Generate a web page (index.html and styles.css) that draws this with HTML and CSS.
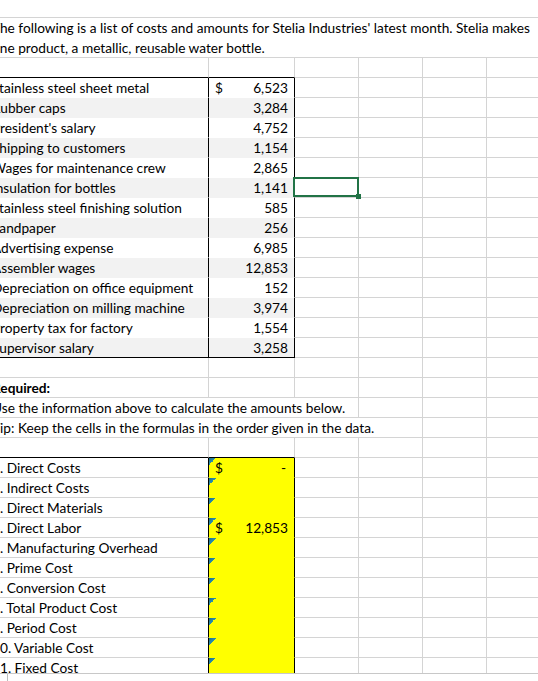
FILE: index.html
```html
<!DOCTYPE html>
<html>
<head>
<meta charset="utf-8">
<link rel="stylesheet" href="styles.css">
</head>
<body>
<div class="wrap">
<div class="sheet">
  <div class="c top"></div>
  <div class="c intro">The following is a list of costs and amounts for Stelia Industries' latest month. Stelia makes<br>one product, a metallic, reusable water bottle.</div>

  <div class="c rule-b"></div><div class="c rule-b"></div><div class="c"></div><div class="c"></div><div class="c"></div><div class="c"></div>

  <div class="c lbl">Stainless steel sheet metal</div><div class="c amt"><span>$</span><span class="num">6,523</span></div><div class="c"></div><div class="c"></div><div class="c"></div><div class="c"></div>
  <div class="c lbl alt">Rubber caps</div><div class="c amt alt"><span class="num">3,284</span></div><div class="c"></div><div class="c"></div><div class="c"></div><div class="c"></div>
  <div class="c lbl">President's salary</div><div class="c amt"><span class="num">4,752</span></div><div class="c"></div><div class="c"></div><div class="c"></div><div class="c"></div>
  <div class="c lbl alt">Shipping to customers</div><div class="c amt alt"><span class="num">1,154</span></div><div class="c"></div><div class="c"></div><div class="c"></div><div class="c"></div>
  <div class="c lbl">Wages for maintenance crew</div><div class="c amt"><span class="num">2,865</span></div><div class="c"></div><div class="c"></div><div class="c"></div><div class="c"></div>
  <div class="c lbl alt">Insulation for bottles</div><div class="c amt alt"><span class="num">1,141</span></div><div class="c sel"><div class="selbox"><div class="handle"></div></div></div><div class="c"></div><div class="c"></div><div class="c"></div>
  <div class="c lbl">Stainless steel finishing solution</div><div class="c amt"><span class="num">585</span></div><div class="c"></div><div class="c"></div><div class="c"></div><div class="c"></div>
  <div class="c lbl alt">Sandpaper</div><div class="c amt alt"><span class="num">256</span></div><div class="c"></div><div class="c"></div><div class="c"></div><div class="c"></div>
  <div class="c lbl">Advertising expense</div><div class="c amt"><span class="num">6,985</span></div><div class="c"></div><div class="c"></div><div class="c"></div><div class="c"></div>
  <div class="c lbl alt">Assembler wages</div><div class="c amt alt"><span class="num">12,853</span></div><div class="c"></div><div class="c"></div><div class="c"></div><div class="c"></div>
  <div class="c lbl">Depreciation on office equipment</div><div class="c amt"><span class="num">152</span></div><div class="c"></div><div class="c"></div><div class="c"></div><div class="c"></div>
  <div class="c lbl alt">Depreciation on milling machine</div><div class="c amt alt"><span class="num">3,974</span></div><div class="c"></div><div class="c"></div><div class="c"></div><div class="c"></div>
  <div class="c lbl">Property tax for factory</div><div class="c amt"><span class="num">1,554</span></div><div class="c"></div><div class="c"></div><div class="c"></div><div class="c"></div>
  <div class="c lbl alt rule-b">Supervisor salary</div><div class="c amt alt rule-b"><span class="num">3,258</span></div><div class="c"></div><div class="c"></div><div class="c"></div><div class="c"></div>

  <div class="c"></div><div class="c"></div><div class="c"></div><div class="c"></div><div class="c"></div><div class="c"></div>
  <div class="c b">Required:</div><div class="c"></div><div class="c"></div><div class="c"></div><div class="c"></div><div class="c"></div>
  <div class="c span3">Use the information above to calculate the amounts below.</div><div class="c"></div><div class="c"></div><div class="c"></div>
  <div class="c span4">Tip: Keep the cells in the formulas in the order given in the data.</div><div class="c"></div><div class="c"></div>
  <div class="c rule-b"></div><div class="c rule-b"></div><div class="c"></div><div class="c"></div><div class="c"></div><div class="c"></div>

  <div class="c q">1. Direct Costs</div><div class="c ans"><span>$</span><span class="num dash">-</span></div><div class="c"></div><div class="c"></div><div class="c"></div><div class="c"></div>
  <div class="c q">2. Indirect Costs</div><div class="c ans"></div><div class="c"></div><div class="c"></div><div class="c"></div><div class="c"></div>
  <div class="c q">3. Direct Materials</div><div class="c ans"></div><div class="c"></div><div class="c"></div><div class="c"></div><div class="c"></div>
  <div class="c q">4. Direct Labor</div><div class="c ans"><span>$</span><span class="num">12,853</span></div><div class="c"></div><div class="c"></div><div class="c"></div><div class="c"></div>
  <div class="c q">5. Manufacturing Overhead</div><div class="c ans"></div><div class="c"></div><div class="c"></div><div class="c"></div><div class="c"></div>
  <div class="c q">6. Prime Cost</div><div class="c ans"></div><div class="c"></div><div class="c"></div><div class="c"></div><div class="c"></div>
  <div class="c q">7. Conversion Cost</div><div class="c ans"></div><div class="c"></div><div class="c"></div><div class="c"></div><div class="c"></div>
  <div class="c q">8. Total Product Cost</div><div class="c ans"></div><div class="c"></div><div class="c"></div><div class="c"></div><div class="c"></div>
  <div class="c q">9. Period Cost</div><div class="c ans"></div><div class="c"></div><div class="c"></div><div class="c"></div><div class="c"></div>
  <div class="c q">10. Variable Cost</div><div class="c ans"></div><div class="c"></div><div class="c"></div><div class="c"></div><div class="c"></div>
  <div class="c q">11. Fixed Cost</div><div class="c ans"></div><div class="c"></div><div class="c"></div><div class="c"></div><div class="c"></div>
</div>
</div>
<div class="footer"><div class="tick"></div></div>
</body>
</html>
```

FILE: styles.css
```css
* { box-sizing: border-box; }
html, body { margin: 0; padding: 0; background: #fff; overflow: hidden; }
body {
  font-family: Lato, "Open Sans", sans-serif;
  font-size: 13.7px;
  color: #000;
}
.wrap { height: 673px; overflow: hidden; }
.sheet {
  display: grid;
  grid-template-columns: 219px 86px 64px 64px 64px 64px;
  grid-auto-rows: 20px;
  width: 561px;
  margin: -2px 0 0 -10px;
}
.c {
  border-right: 1px solid #d4d4d4;
  border-bottom: 1px solid #d4d4d4;
  padding: 0 0 0 2px;
  white-space: nowrap;
  line-height: 19px;
}
.top { grid-column: 1 / -1; border-right: 0; }
.intro {
  grid-column: 1 / -1;
  grid-row: span 2;
  border-right: 0;
  line-height: 20px;
}
.span3 { grid-column: span 3; }
.span4 { grid-column: span 4; }
.b { font-weight: 700; }
.lbl {
  background: #fff;
  border-right-color: #000;
  border-bottom-color: #fff;
}
.amt {
  display: flex;
  padding: 0 6px;
  background: #fff;
  border-right-color: #000;
  border-bottom-color: #fff;
}
.num { margin-left: auto; }
.dash { padding-right: 2px; }
.alt { background: #f2f2f2; border-bottom-color: #f2f2f2; }
.rule-b { border-bottom-color: #000; }
.q { border-right-color: #000; }
.ans {
  position: relative;
  display: flex;
  padding: 0 6px;
  background: #ffff00;
  border-right-color: #000;
  border-bottom-color: #ffff00;
}
.ans::before {
  content: "";
  position: absolute;
  left: 0;
  top: 0;
  width: 7px;
  height: 7px;
  background: linear-gradient(135deg, #1b6c8c 0, #2a8fae 50%, transparent 50%);
}
.sel { position: relative; }
.selbox {
  position: absolute;
  left: -2px;
  top: -1px;
  right: -1px;
  bottom: 0;
  border: 2px solid #217346;
}
.handle {
  position: absolute;
  right: -4px;
  bottom: -4px;
  width: 5px;
  height: 5px;
  background: #217346;
}
.footer {
  height: 8px;
  border-top: 1px solid #c8c8c8;
  background: #fff;
}
.tick {
  margin-left: 7px;
  width: 1px;
  height: 100%;
  background: #bdbdbd;
}
```
